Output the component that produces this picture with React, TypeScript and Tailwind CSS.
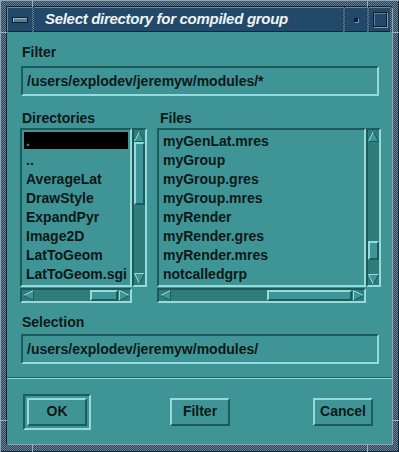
import React from 'react';

const sunken = 'border-2 border-t-[#1d5b5b] border-l-[#1d5b5b] border-b-[#96dbdb] border-r-[#96dbdb]';
const raised = 'border-2 border-t-[#96dbdb] border-l-[#96dbdb] border-b-[#1d5b5b] border-r-[#1d5b5b]';
const stipple = 'bg-[repeating-conic-gradient(#2a4257_0%_25%,#6b8396_0%_50%)] bg-[length:2px_2px]';

const LIGHT = '#96dbdb';
const DARK = '#1d5b5b';

function Arrow({ dir }: { dir: 'up' | 'down' | 'left' | 'right' }) {
  const edges: Record<string, [string, string]> = {
    up: ['5.5,0.5 0.5,10.5', '0.5,10.5 10.5,10.5 5.5,0.5'],
    down: ['5.5,10.5 0.5,0.5 10.5,0.5', '10.5,0.5 5.5,10.5'],
    left: ['10.5,0.5 0.5,5.5', '0.5,5.5 10.5,10.5 10.5,0.5'],
    right: ['0.5,10.5 0.5,0.5 10.5,5.5', '10.5,5.5 0.5,10.5'],
  };
  const fill = {
    up: '5.5,0.5 0.5,10.5 10.5,10.5',
    down: '0.5,0.5 10.5,0.5 5.5,10.5',
    left: '0.5,5.5 10.5,0.5 10.5,10.5',
    right: '0.5,0.5 10.5,5.5 0.5,10.5',
  }[dir];
  return (
    <svg width="11" height="11" viewBox="0 0 11 11" className="block shrink-0">
      <polygon points={fill} fill="#3f9595" />
      <polyline points={edges[dir][0]} fill="none" stroke={LIGHT} strokeWidth="1" />
      <polyline points={edges[dir][1]} fill="none" stroke={DARK} strokeWidth="1" />
    </svg>
  );
}

function FileList({ items, selected }: { items: string[]; selected?: number }) {
  return (
    <div className={`h-[159px] flex-1 pt-[2px] px-[2px] overflow-hidden bg-[#3f9595] ${sunken}`}>
      {items.map((item, i) =>
        i === selected ? (
          <div key={item} className="h-[17px] mb-[2px] pl-[2px] bg-black leading-[19px] text-[#3f9595]">
            {item}
          </div>
        ) : (
          <div key={item} className="h-[19px] pl-[2px] leading-[19px] whitespace-nowrap">
            {item}
          </div>
        )
      )}
    </div>
  );
}

function Button({ children }: { children: React.ReactNode }) {
  return (
    <div className={`w-[60px] h-[28px] flex items-center justify-center bg-[#3f9595] ${raised}`}>
      {children}
    </div>
  );
}

export default function App() {
  const dirs = ['.', '..', 'AverageLat', 'DrawStyle', 'ExpandPyr', 'Image2D', 'LatToGeom', 'LatToGeom.sgi'];
  const files = [
    'myGenLat.mres',
    'myGroup',
    'myGroup.gres',
    'myGroup.mres',
    'myRender',
    'myRender.gres',
    'myRender.mres',
    'notcalledgrp',
  ];

  return (
    <div
      className={`relative w-[399px] h-[452px] overflow-hidden pt-[7px] px-[7px] pb-[8px] ${stipple} shadow-[inset_1px_1px_0_#8fa7b8,inset_-1px_-1px_0_#132636] font-['Liberation_Sans',Arial,sans-serif] font-bold text-[14px] text-[#0e1818]`}
    >
      {/* frame corner notches */}
      <div className="absolute left-[32px] top-0 w-[1px] h-[7px] bg-[#9ab0c0]" />
      <div className="absolute left-[367px] top-0 w-[1px] h-[7px] bg-[#9ab0c0]" />
      <div className="absolute left-[32px] bottom-0 w-[1px] h-[8px] bg-[#9ab0c0]" />
      <div className="absolute left-[367px] bottom-0 w-[1px] h-[8px] bg-[#9ab0c0]" />
      <div className="absolute left-0 top-[32px] w-[7px] h-[1px] bg-[#9ab0c0]" />
      <div className="absolute left-0 top-[420px] w-[7px] h-[1px] bg-[#9ab0c0]" />
      <div className="absolute right-0 top-[32px] w-[7px] h-[1px] bg-[#9ab0c0]" />
      <div className="absolute right-0 top-[420px] w-[7px] h-[1px] bg-[#9ab0c0]" />

      <div className="flex h-full flex-col shadow-[-1px_-1px_0_#132636,1px_1px_0_#8fa7b8]">
        {/* title bar */}
        <div className="flex h-[25px] shrink-0 bg-[#22496a]">
          <div className="w-[25px] flex items-center justify-center border-t border-l border-t-[#6d8ca3] border-l-[#6d8ca3] border-b border-b-[#0f2434]">
            <div className="w-[16px] h-[6px] border border-[#0d1f2d] bg-[#5b7b92] shadow-[inset_1px_1px_0_#9cb6c8]" />
          </div>
          <div className={`w-[2px] ${stipple}`} />
          <div className="flex-1 pl-[11px] leading-[22px] italic text-[15px] tracking-[-0.3px] text-[#eef4f6] border-t border-t-[#6d8ca3] border-b border-b-[#0f2434] whitespace-nowrap">
            Select directory for compiled group
          </div>
          <div className={`w-[2px] ${stipple}`} />
          <div className="w-[22px] flex items-center justify-center border-t border-t-[#6d8ca3] border-b border-b-[#0f2434]">
            <div className="w-[4px] h-[4px] bg-[#0d1f2d] shadow-[1px_1px_0_#7d9bb0]" />
          </div>
          <div className={`w-[2px] ${stipple}`} />
          <div className="w-[21px] flex items-center justify-center border-t border-t-[#6d8ca3] border-b border-b-[#0f2434]">
            <div className="w-[14px] h-[15px] border border-[#0d1f2d] shadow-[inset_1px_1px_0_#5f7f96,1px_1px_0_#7d9bb0]" />
          </div>
          <div className={`w-[2px] ${stipple}`} />
        </div>

        {/* dialog body */}
        <div className="flex flex-1 flex-col bg-[#3f9595]">
          <div className="mt-[12px] ml-[15px] h-[16px] leading-[16px]">Filter</div>
          <div className={`mt-[6px] ml-[14px] mr-[13px] h-[30px] pl-[4px] leading-[26px] whitespace-nowrap ${sunken}`}>
            /users/explodev/jeremyw/modules/*
          </div>

          <div className="mt-[14px] ml-[13px] flex">
            {/* directories */}
            <div className="w-[127px] flex flex-col">
              <div className="h-[16px] pl-[2px] leading-[16px]">Directories</div>
              <div className="mt-[2px] flex">
                <FileList items={dirs} selected={0} />
                <div className={`w-[15px] h-[159px] flex flex-col bg-[#2e7c7c] ${sunken}`}>
                  <div className="h-[12px] flex items-center justify-center">
                    <Arrow dir="up" />
                  </div>
                  <div className={`h-[63px] bg-[#3f9595] ${raised}`} />
                  <div className="flex-1" />
                  <div className="h-[13px] flex items-center justify-center">
                    <Arrow dir="down" />
                  </div>
                </div>
              </div>
              <div className={`mt-[1px] w-[112px] h-[15px] flex bg-[#2e7c7c] ${sunken}`}>
                <div className="w-[12px] flex items-center justify-center">
                  <Arrow dir="left" />
                </div>
                <div className="w-[56px]" />
                <div className={`w-[28px] bg-[#3f9595] ${raised}`} />
                <div className="w-[12px] flex items-center justify-center">
                  <Arrow dir="right" />
                </div>
              </div>
            </div>

            {/* files */}
            <div className="ml-[10px] w-[224px] flex flex-col">
              <div className="h-[16px] pl-[3px] leading-[16px]">Files</div>
              <div className="mt-[2px] flex">
                <FileList items={files} />
                <div className={`w-[15px] h-[159px] flex flex-col bg-[#2e7c7c] ${sunken}`}>
                  <div className="h-[12px] flex items-center justify-center">
                    <Arrow dir="up" />
                  </div>
                  <div className="h-[99px]" />
                  <div className={`h-[19px] bg-[#3f9595] ${raised}`} />
                  <div className="flex-1" />
                  <div className="h-[12px] flex items-center justify-center">
                    <Arrow dir="down" />
                  </div>
                </div>
              </div>
              <div className={`mt-[1px] w-[209px] h-[15px] flex bg-[#2e7c7c] ${sunken}`}>
                <div className="w-[12px] flex items-center justify-center">
                  <Arrow dir="left" />
                </div>
                <div className="w-[96px]" />
                <div className={`w-[85px] bg-[#3f9595] ${raised}`} />
                <div className="w-[12px] flex items-center justify-center">
                  <Arrow dir="right" />
                </div>
              </div>
            </div>
          </div>

          <div className="mt-[11px] ml-[15px] h-[16px] leading-[16px]">Selection</div>
          <div className={`mt-[4px] ml-[14px] mr-[13px] h-[30px] pl-[4px] leading-[26px] whitespace-nowrap ${sunken}`}>
            /users/explodev/jeremyw/modules/
          </div>

          <div className="mt-[13px] h-[2px] border-t border-t-[#1d5b5b] border-b border-b-[#96dbdb]" />

          <div className="flex flex-1 items-center pl-[16px]">
            <div className={`w-[68px] h-[36px] p-[2px] ${sunken}`}>
              <Button>OK</Button>
            </div>
            <div className="ml-[79px]">
              <Button>Filter</Button>
            </div>
            <div className="ml-[83px]">
              <Button>Cancel</Button>
            </div>
          </div>
        </div>
      </div>
    </div>
  );
}
